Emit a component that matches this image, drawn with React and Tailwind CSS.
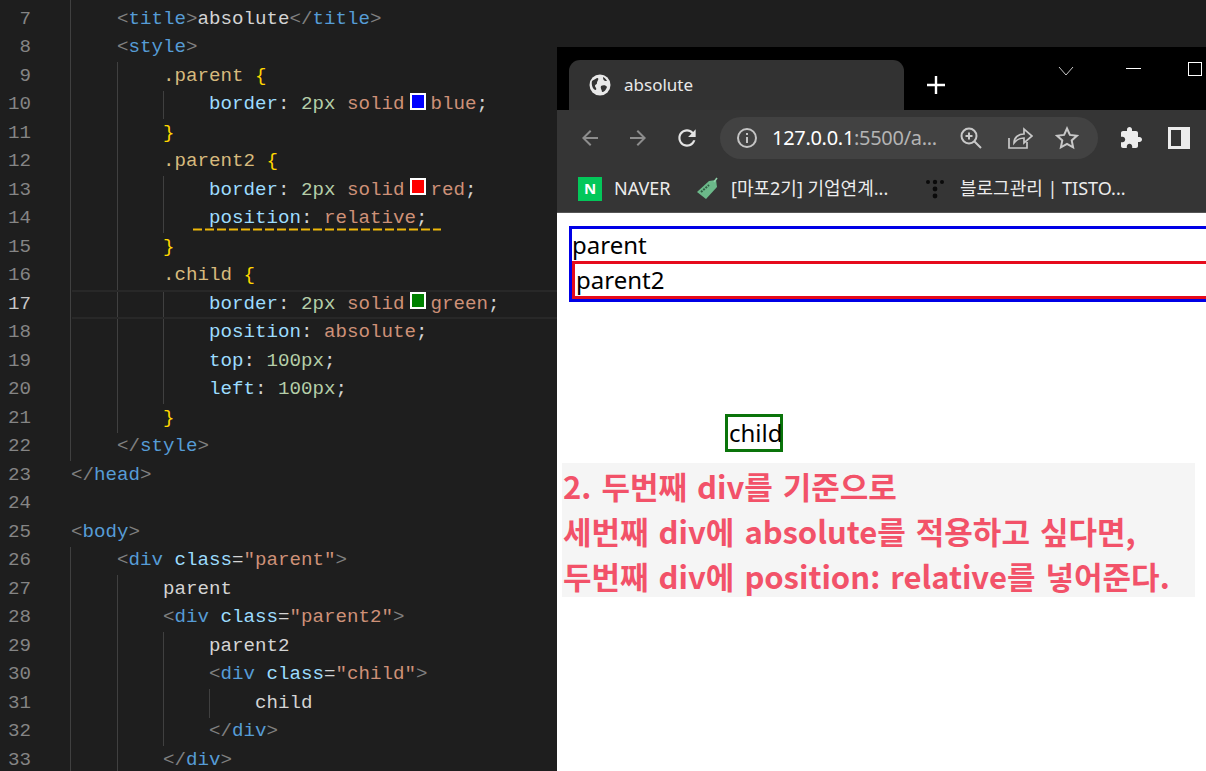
import React from "react";

const tokenClass = {
  p: "text-[#808080]",
  t: "text-[#569cd6]",
  a: "text-[#9cdcfe]",
  s: "text-[#ce9178]",
  x: "text-[#d4d4d4]",
  c: "text-[#d7ba7d]",
  b: "text-[#ffd700]",
  n: "text-[#b5cea8]",
};

const guideClass = ["left-[70px]", "left-[117px]", "left-[163px]", "left-[209px]"];

const swatchClass = {
  blue: "bg-[#0000ff]",
  red: "bg-[#ff0000]",
  green: "bg-[#008000]",
};

const lines = [
  { n: 6, guides: [0], code: [["x", "    "], ["p", "<"], ["t", "meta"], ["x", " "], ["a", "name"], ["x", "="], ["s", '"viewport"'], ["x", " "], ["a", "content"], ["x", "="], ["s", '"width=device-width, initial-scale=1.0"'], ["p", ">"]] },
  { n: 7, guides: [0], code: [["x", "    "], ["p", "<"], ["t", "title"], ["p", ">"], ["x", "absolute"], ["p", "</"], ["t", "title"], ["p", ">"]] },
  { n: 8, guides: [0], code: [["x", "    "], ["p", "<"], ["t", "style"], ["p", ">"]] },
  { n: 9, guides: [0, 1], code: [["x", "        "], ["c", ".parent"], ["x", " "], ["b", "{"]] },
  { n: 10, guides: [0, 1, 2], color: "blue", code: [["x", "            "], ["a", "border"], ["x", ": "], ["n", "2px"], ["x", " "], ["s", "solid"], ["x", " "], ["swatch", "blue"], ["s", "blue"], ["x", ";"]] },
  { n: 11, guides: [0, 1], code: [["x", "        "], ["b", "}"]] },
  { n: 12, guides: [0, 1], code: [["x", "        "], ["c", ".parent2"], ["x", " "], ["b", "{"]] },
  { n: 13, guides: [0, 1, 2], code: [["x", "            "], ["a", "border"], ["x", ": "], ["n", "2px"], ["x", " "], ["s", "solid"], ["x", " "], ["swatch", "red"], ["s", "red"], ["x", ";"]] },
  { n: 14, guides: [0, 1, 2], squiggle: true, code: [["x", "            "], ["a", "position"], ["x", ": "], ["s", "relative"], ["x", ";"]] },
  { n: 15, guides: [0, 1], code: [["x", "        "], ["b", "}"]] },
  { n: 16, guides: [0, 1], code: [["x", "        "], ["c", ".child"], ["x", " "], ["b", "{"]] },
  { n: 17, guides: [0, 1, 2], active: true, code: [["x", "            "], ["a", "border"], ["x", ": "], ["n", "2px"], ["x", " "], ["s", "solid"], ["x", " "], ["swatch", "green"], ["s", "green"], ["x", ";"]] },
  { n: 18, guides: [0, 1, 2], code: [["x", "            "], ["a", "position"], ["x", ": "], ["s", "absolute"], ["x", ";"]] },
  { n: 19, guides: [0, 1, 2], code: [["x", "            "], ["a", "top"], ["x", ": "], ["n", "100px"], ["x", ";"]] },
  { n: 20, guides: [0, 1, 2], code: [["x", "            "], ["a", "left"], ["x", ": "], ["n", "100px"], ["x", ";"]] },
  { n: 21, guides: [0, 1], code: [["x", "        "], ["b", "}"]] },
  { n: 22, guides: [0], code: [["x", "    "], ["p", "</"], ["t", "style"], ["p", ">"]] },
  { n: 23, guides: [], code: [["p", "</"], ["t", "head"], ["p", ">"]] },
  { n: 24, guides: [], code: [] },
  { n: 25, guides: [], code: [["p", "<"], ["t", "body"], ["p", ">"]] },
  { n: 26, guides: [0], code: [["x", "    "], ["p", "<"], ["t", "div"], ["x", " "], ["a", "class"], ["x", "="], ["s", '"parent"'], ["p", ">"]] },
  { n: 27, guides: [0, 1], code: [["x", "        parent"]] },
  { n: 28, guides: [0, 1], code: [["x", "        "], ["p", "<"], ["t", "div"], ["x", " "], ["a", "class"], ["x", "="], ["s", '"parent2"'], ["p", ">"]] },
  { n: 29, guides: [0, 1, 2], code: [["x", "            parent2"]] },
  { n: 30, guides: [0, 1, 2], code: [["x", "            "], ["p", "<"], ["t", "div"], ["x", " "], ["a", "class"], ["x", "="], ["s", '"child"'], ["p", ">"]] },
  { n: 31, guides: [0, 1, 2, 3], code: [["x", "                child"]] },
  { n: 32, guides: [0, 1, 2], code: [["x", "            "], ["p", "</"], ["t", "div"], ["p", ">"]] },
  { n: 33, guides: [0, 1], code: [["x", "        "], ["p", "</"], ["t", "div"], ["p", ">"]] },
];

const CodeLine = ({ line }) => (
  <div className="relative flex h-[28.5px] items-center whitespace-pre">
    <span
      className={`w-[31px] shrink-0 text-right ${line.active ? "text-[#c6c6c6]" : "text-[#858585]"}`}
    >
      {line.n}
    </span>
    <span className="ml-[40px]">
      {line.code.map(([kind, text], i) =>
        kind === "swatch" ? (
          <span key={i} className="inline-block w-[14.5px] pl-[-1px] align-middle">
            <span className={`ml-[-6px] mt-[-6px] block h-[17px] w-[16px] border-2 border-white ${swatchClass[text]}`} />
          </span>
        ) : (
          <span key={i} className={tokenClass[kind]}>
            {text}
          </span>
        )
      )}
    </span>
    {line.guides.map((g) => (
      <span key={g} className={`absolute top-0 h-full w-px bg-[#404040] ${guideClass[g]}`} />
    ))}
    {line.active && (
      <span className="absolute left-[72px] right-0 top-0 h-full border-y-2 border-[#282828]" />
    )}
    {line.squiggle && (
      <svg className="absolute left-[193px] top-[23px]" width="248" height="3">
        <line x1="0" y1="1.5" x2="248" y2="1.5" stroke="#eeb70a" strokeWidth="2" strokeDasharray="9 3" />
      </svg>
    )}
  </div>
);

const Icon = ({ d, size = 24, fill = "#dcdcdc" }) => (
  <svg width={size} height={size} viewBox="0 0 24 24" fill={fill} className="shrink-0">
    <path d={d} />
  </svg>
);

const BACK = "M20 11H7.83l5.59-5.59L12 4l-8 8 8 8 1.41-1.41L7.83 13H20v-2z";
const FORWARD = "M12 4l-1.41 1.41L16.17 11H4v2h12.17l-5.58 5.59L12 20l8-8z";
const RELOAD =
  "M17.65 6.35C16.2 4.9 14.21 4 12 4c-4.42 0-7.99 3.58-7.99 8s3.57 8 7.99 8c3.73 0 6.84-2.55 7.73-6h-2.08c-.82 2.33-3.04 4-5.65 4-3.31 0-6-2.69-6-6s2.69-6 6-6c1.66 0 3.14.69 4.22 1.78L13 11h7V4l-2.35 2.35z";
const PUZZLE =
  "M20.5 11H19V7c0-1.1-.9-2-2-2h-4V3.5C13 2.12 11.88 1 10.5 1S8 2.12 8 3.5V5H4c-1.1 0-1.99.9-1.99 2v3.8H3.5c1.49 0 2.7 1.21 2.7 2.7s-1.21 2.7-2.7 2.7H2V20c0 1.1.9 2 2 2h3.8v-1.5c0-1.49 1.21-2.7 2.7-2.7 1.49 0 2.7 1.21 2.7 2.7V22H17c1.1 0 2-.9 2-2v-4h1.5c1.38 0 2.5-1.12 2.5-2.5S21.88 11 20.5 11z";

const Favicon = () => (
  <svg width="22" height="22" viewBox="0 0 22 22" className="shrink-0">
    <circle cx="11" cy="11" r="10.5" fill="#e8e8e8" />
    <path d="M3 7c2-1 4-3 6-3 1 2-1 3-1 5 0 2-2 1-2 3 0 1 2 2 1 4-3 0-5-5-4-9z" fill="#323232" />
    <path d="M12 12c2-1 5-1 6 1-1 3-3 5-5 5 0-2-2-4-1-6zM14 3c2 1 3 2 4 4-2 0-4 0-4-4z" fill="#323232" />
  </svg>
);

const TagIcon = () => (
  <svg width="24" height="26" viewBox="0 0 24 26" className="shrink-0">
    <path d="M14 5l7-1 1 7-11 12-9-7z" fill="#6cb98a" />
    <path d="M6 16l8-7" stroke="#2f5f43" strokeWidth="2" strokeDasharray="2 1" />
    <path d="M19 6l3-4" stroke="#8fd0a8" strokeWidth="1.5" />
  </svg>
);

const DotsIcon = () => (
  <svg width="20" height="20" viewBox="0 0 20 20" fill="#0a0a0a" className="shrink-0">
    <circle cx="3" cy="3" r="2" />
    <circle cx="10" cy="3" r="2.2" />
    <circle cx="17" cy="3" r="2" />
    <circle cx="10" cy="10" r="2.4" />
    <circle cx="10" cy="17" r="2.4" />
  </svg>
);

const Browser = () => (
  <div className="absolute left-[557px] top-[47px] w-[720px] h-[724px] flex flex-col bg-white font-['Noto_Sans','Noto_Sans_CJK_KR',sans-serif]">
    {/* tab strip */}
    <div className="flex h-[63px] items-end bg-black pl-[12px]">
      <div className="flex h-[50px] w-[335px] items-center rounded-t-[11px] bg-[#323232] pl-[20px]">
        <Favicon />
        <span className="ml-[13px] text-[17px] text-[#e8e8e8]">absolute</span>
        <svg className="ml-[239px]" width="14" height="14" viewBox="0 0 14 14" stroke="#f2f2f2" strokeWidth="2.2">
          <path d="M2 2l10 10M12 2L2 12" />
        </svg>
      </div>
      <svg className="mb-[16px] ml-[23px]" width="18" height="18" viewBox="0 0 18 18" stroke="#fff" strokeWidth="2.4">
        <path d="M9 0v18M0 9h18" />
      </svg>
      <svg className="mb-[34px] ml-[113px]" width="16" height="10" viewBox="0 0 16 10" fill="none" stroke="#c8c8c8">
        <path d="M1 1l7 8 7-8" />
      </svg>
      <span className="mb-[41px] ml-[52px] h-px w-[15px] bg-white" />
      <span className="mb-[34px] ml-[47px] h-[14px] w-[14px] border border-white" />
    </div>

    {/* toolbar */}
    <div className="flex h-[55px] items-center bg-[#353535] pl-[21px]">
      <Icon d={BACK} fill="#8d8d8d" />
      <span className="ml-[24px]">
        <Icon d={FORWARD} fill="#8d8d8d" />
      </span>
      <span className="ml-[24px]">
        <Icon d={RELOAD} size={26} fill="#e4e4e4" />
      </span>
      <div className="ml-[20px] flex h-[42px] w-[378px] items-center rounded-full bg-[#424242] pl-[16px]">
        <svg width="22" height="22" viewBox="0 0 22 22" fill="none" stroke="#c4c4c4" strokeWidth="2">
          <circle cx="11" cy="11" r="9" />
          <path d="M11 10v6M11 6v2" />
        </svg>
        <span className="ml-[14px] w-[174px] whitespace-nowrap text-[20px] tracking-[-0.3px] text-white">
          127.0.0.1<span className="text-[#b4b4b4]">:5500/a...</span>
        </span>
        <svg className="ml-[13px]" width="24" height="24" viewBox="0 0 24 24" fill="none" stroke="#c8c8c8" strokeWidth="2">
          <circle cx="10" cy="10" r="7.5" />
          <path d="M15.5 15.5L22 22M10 6.5v7M6.5 10h7" />
        </svg>
        <svg className="ml-[24px]" width="26" height="24" viewBox="0 0 26 24" fill="none" stroke="#c8c8c8" strokeWidth="1.7">
          <path d="M2 12v10h18v-6" />
          <path d="M7 17c0-6 5-9 10-9V3l8 7-8 7v-5c-4 0-7 1-10 5z" />
        </svg>
        <svg className="ml-[22px]" width="24" height="24" viewBox="0 0 24 24" fill="none" stroke="#c8c8c8" strokeWidth="2">
          <path d="M12 2.5l2.9 6.4 7 .8-5.2 4.7 1.4 6.9-6.1-3.5-6.1 3.5 1.4-6.9L2.100 9.700l7-.8z" />
        </svg>
      </div>
      <span className="ml-[21px]">
        <Icon d={PUZZLE} fill="#ececec" />
      </span>
      <svg className="ml-[25px]" width="22" height="22" viewBox="0 0 22 22">
        <path d="M0 0h22v22H0z" fill="#ececec" />
        <path d="M3 3h10v16H3z" fill="#353535" />
      </svg>
    </div>

    {/* bookmarks */}
    <div className="flex h-[48px] items-center border-b border-[#555] bg-[#353535] pl-[21px] text-[18px] text-[#ececec]">
      <span className="flex h-[24px] w-[24px] items-center justify-center bg-[#03c75a] text-[15px] font-bold leading-none text-white">
        N
      </span>
      <span className="ml-[12px] w-[69px] whitespace-nowrap">NAVER</span>
      <span className="ml-[12px]">
        <TagIcon />
      </span>
      <span className="ml-[12px] w-[167px] whitespace-nowrap">[마포2기] 기업연계...</span>
      <span className="ml-[27px]">
        <DotsIcon />
      </span>
      <span className="ml-[15px] whitespace-nowrap">블로그관리 | TISTO...</span>
    </div>

    {/* page */}
    <div className="flex-1 pl-[12px] pt-[13px] text-[24px] text-black">
      <div className="border-[3px] border-[#0000e6] leading-[32px]">
        <div className="h-[32px]">parent</div>
        <div className="h-[38px] border-[3px] border-[#e60b1c] pl-px">parent2</div>
      </div>
      <div className="ml-[156px] mt-[112px] h-[38px] w-[58px] border-[3px] border-[#0a740a] pl-px leading-[32px]">
        child
      </div>
      <div className="-ml-[7px] mt-[11px] h-[134px] w-[633px] bg-[#f5f5f5] pl-px font-['Noto_Sans_CJK_KR',sans-serif] text-[31px] font-bold leading-[45px] text-[#f25269] [word-spacing:3px]">
        <div className="whitespace-nowrap">2. 두번째 div를 기준으로</div>
        <div className="whitespace-nowrap">세번째 div에 absolute를 적용하고 싶다면,</div>
        <div className="whitespace-nowrap">두번째 div에 position: relative를 넣어준다.</div>
      </div>
    </div>
  </div>
);

const App = () => (
  <div className="relative h-[771px] w-[1206px] overflow-hidden bg-[#1e1e1e] font-['Liberation_Mono',monospace] text-[19.17px]">
    <div className="-mt-[23.5px]">
      {lines.map((line) => (
        <CodeLine key={line.n} line={line} />
      ))}
    </div>
    <Browser />
  </div>
);

export default App;
